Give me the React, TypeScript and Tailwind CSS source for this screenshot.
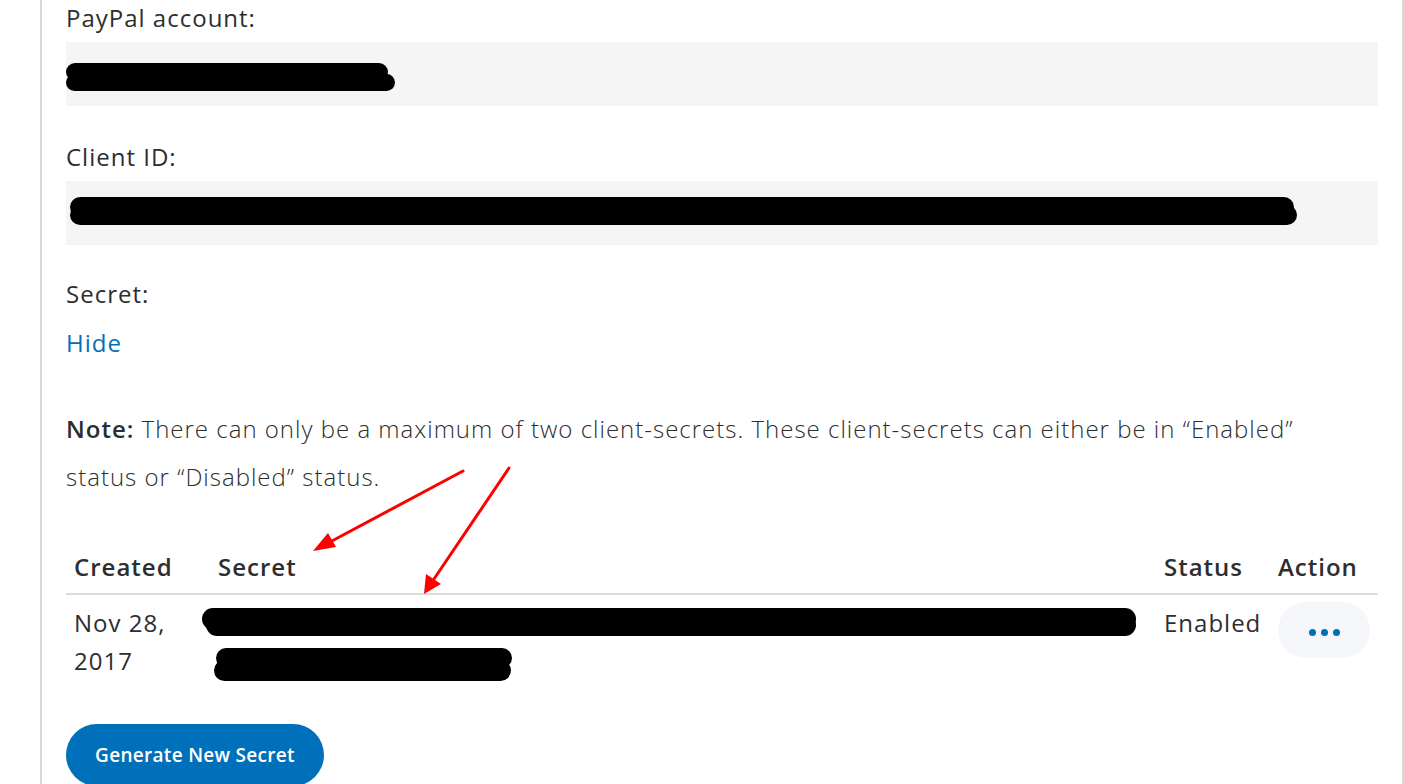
const font = "font-['Open_Sans','Noto_Sans',sans-serif]";

function Redaction({ width, height, strokes }: { width: number; height: number; strokes: { x: number; y: number; w: number; h: number }[] }) {
  return (
    <svg width={width} height={height} viewBox={`0 0 ${width} ${height}`} className="block">
      {strokes.map((s, i) => (
        <rect key={i} x={s.x} y={s.y} width={s.w} height={s.h} rx={s.h / 2} fill="#000" />
      ))}
    </svg>
  );
}

function Field({ label, children, first }: { label: string; children: React.ReactNode; first?: boolean }) {
  return (
    <div className={first ? "" : "mt-[33px]"}>
      <div className="text-[24px] leading-[35px] tracking-[1px] text-[#2c2e2f]">{label}</div>
      <div className="mt-[7px] h-[64px] bg-[#f5f5f5]">{children}</div>
    </div>
  );
}

export default function App() {
  return (
    <div className={`relative h-[784px] w-[1404px] overflow-hidden bg-white ${font}`}>
      <div className="ml-[40px] h-full w-[1364px] border-x-2 border-[#d9d9d9] px-[24px]">
        <Field label="PayPal account:" first>
          <div className="pt-[20px]">
            <Redaction
              width={330}
              height={30}
              strokes={[
                { x: 0, y: 1, w: 322, h: 18 },
                { x: 0, y: 12, w: 329, h: 17 },
              ]}
            />
          </div>
        </Field>

        <Field label="Client ID:">
          <div className="pt-[14px] pl-[4px]">
            <Redaction
              width={1228}
              height={32}
              strokes={[
                { x: 0, y: 2, w: 1224, h: 20 },
                { x: 0, y: 10, w: 1227, h: 20 },
              ]}
            />
          </div>
        </Field>

        <div className="mt-[32px] text-[24px] leading-[34px] tracking-[1px] text-[#2c2e2f]">Secret:</div>
        <div className="mt-[14px] text-[24px] leading-[36px] tracking-[1px] text-[#0070ba]">Hide</div>

        <p className="mt-[44px] pr-[60px] text-[24px] leading-[48px] font-light tracking-[1px] text-[#2c2e2f]">
          <span className="font-semibold">Note:</span> There can only be a maximum of two client-secrets. These client-secrets can either be in “Enabled” status or “Disabled” status.
        </p>

        <table className="mt-[40px] w-full table-fixed border-collapse text-[24px] tracking-[1px] text-[#2c2e2f]">
          <colgroup>
            <col className="w-[144px]" />
            <col />
            <col className="w-[114px]" />
            <col className="w-[108px]" />
          </colgroup>
          <thead>
            <tr className="border-b-2 border-[#dcdcdc]">
              <th className="px-2 pt-[8px] pb-[8px] text-left font-semibold leading-[36px]">Created</th>
              <th className="px-2 pt-[8px] pb-[8px] text-left font-semibold leading-[36px]">Secret</th>
              <th className="px-2 pt-[8px] pb-[8px] text-left font-semibold leading-[36px]">Status</th>
              <th className="px-2 pt-[8px] pb-[8px] text-left font-semibold leading-[36px]">Action</th>
            </tr>
          </thead>
          <tbody>
            <tr>
              <td className="px-2 pt-[9px] pb-[8px] align-top leading-[38px]">
                Nov 28,
                <br />
                2017
              </td>
              <td className="px-0 pt-[13px] pb-[8px] align-top">
                <div className="-ml-[8px]">
                  <Redaction
                    width={936}
                    height={30}
                    strokes={[
                      { x: 0, y: 0, w: 934, h: 22 },
                      { x: 4, y: 6, w: 930, h: 22 },
                    ]}
                  />
                  <div className="mt-[10px] pl-[12px]">
                    <Redaction
                      width={300}
                      height={34}
                      strokes={[
                        { x: 2, y: 0, w: 296, h: 20 },
                        { x: 0, y: 12, w: 297, h: 21 },
                      ]}
                    />
                  </div>
                </div>
              </td>
              <td className="px-2 pt-[9px] pb-[8px] align-top leading-[38px]">Enabled</td>
              <td className="px-2 pt-[7px] pb-[8px] align-top">
                <button className="flex h-[56px] w-[92px] items-center justify-center gap-[5px] rounded-full bg-[#f5f7fa] pt-[4px]">
                  <span className="h-[7px] w-[7px] rounded-full bg-[#0070ba]" />
                  <span className="h-[7px] w-[7px] rounded-full bg-[#0070ba]" />
                  <span className="h-[7px] w-[7px] rounded-full bg-[#0070ba]" />
                </button>
              </td>
            </tr>
          </tbody>
        </table>

        <button className="mt-[34px] flex h-[62px] w-[258px] items-center justify-center rounded-full bg-[#0070ba] text-[19px] font-semibold tracking-[0.3px] text-white">
          Generate New Secret
        </button>
      </div>

      <svg className="pointer-events-none absolute left-0 top-0" width={1404} height={784}>
        <line x1={463} y1={471} x2={330} y2={542} stroke="#ff0000" strokeWidth={3} strokeLinecap="round" />
        <polygon points="313,551 328,533 336,547" fill="#ff0000" />
        <line x1={509} y1={468} x2={434} y2={579} stroke="#ff0000" strokeWidth={3} strokeLinecap="round" />
        <polygon points="424,594 426,574 441,584" fill="#ff0000" />
      </svg>
    </div>
  );
}
